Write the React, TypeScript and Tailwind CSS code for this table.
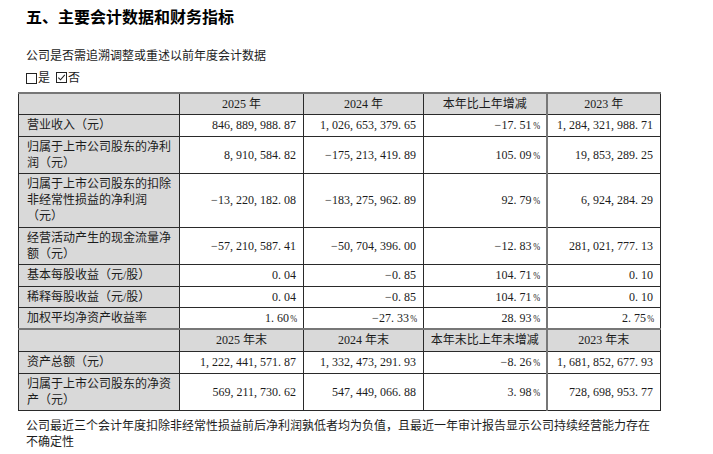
import React from 'react'

type Row = { label: string; values: string[]; h: string }

const headTop = ['2025 年', '2024 年', '本年比上年增减', '2023 年']
const headBottom = ['2025 年末', '2024 年末', '本年末比上年末增减', '2023 年末']

const rowsTop: Row[] = [
  { label: '营业收入（元）', values: ['846,889,988.87', '1,026,653,379.65', '-17.51%', '1,284,321,988.71'], h: 'h-[22px]' },
  { label: '归属于上市公司股东的净利润（元）', values: ['8,910,584.82', '-175,213,419.89', '105.09%', '19,853,289.25'], h: 'h-[37px]' },
  { label: '归属于上市公司股东的扣除非经常性损益的净利润（元）', values: ['-13,220,182.08', '-183,275,962.89', '92.79%', '6,924,284.29'], h: 'h-[54px]' },
  { label: '经营活动产生的现金流量净额（元）', values: ['-57,210,587.41', '-50,704,396.00', '-12.83%', '281,021,777.13'], h: 'h-[37px]' },
  { label: '基本每股收益（元/股）', values: ['0.04', '-0.85', '104.71%', '0.10'], h: 'h-[22px]' },
  { label: '稀释每股收益（元/股）', values: ['0.04', '-0.85', '104.71%', '0.10'], h: 'h-[21px]' },
  { label: '加权平均净资产收益率', values: ['1.60%', '-27.33%', '28.93%', '2.75%'], h: 'h-[22px]' },
]

const rowsBottom: Row[] = [
  { label: '资产总额（元）', values: ['1,222,441,571.87', '1,332,473,291.93', '-8.26%', '1,681,852,677.93'], h: 'h-[22px]' },
  { label: '归属于上市公司股东的净资产（元）', values: ['569,211,730.62', '547,449,066.88', '3.98%', '728,698,953.77'], h: 'h-[37px]' },
]

function Num({ text }: { text: string }) {
  return (
    <span className="whitespace-nowrap">
      {text.split('').map((ch, i) => {
        if (ch >= '0' && ch <= '9') return <span key={i}>{ch}</span>
        if (ch === ',' || ch === '.')
          return <span key={i} className="inline-block w-[6px] text-left">{ch}</span>
        if (ch === '-')
          return <span key={i} className="inline-block w-[7px] text-center">−</span>
        if (ch === '%')
          return <span key={i} className="inline-block w-[7px] text-center"><span className="inline-block scale-x-75 text-[11px]">%</span></span>
        return <span key={i}>{ch}</span>
      })}
    </span>
  )
}

function Box({ checked }: { checked?: boolean }) {
  return (
    <svg width="11" height="11" viewBox="0 0 11 11" className="inline-block align-[-1px]">
      <rect x="0.5" y="0.5" width="10" height="10" fill="none" stroke="#222" strokeWidth="1" />
      {checked && <path d="M2.3 5.6 L4.5 7.8 L8.8 2.8" fill="none" stroke="#222" strokeWidth="1.1" />}
    </svg>
  )
}

const cell = 'border border-[#2a2a2a] px-[7px] py-0 align-middle'

function HeadRow({ cols, h }: { cols: string[]; h: string }) {
  return (
    <tr className={`bg-[#d9d9d9] ${h}`}>
      <td className={`${cell} border-t-2 border-t-[#777]`}></td>
      {cols.map((c, i) => (
        <td
          key={c}
          className={`${cell} !px-0 whitespace-nowrap border-t-2 border-t-[#777] text-center ${i === 3 ? 'border-l-2 border-l-[#777]' : ''}`}
        >
          {c}
        </td>
      ))}
    </tr>
  )
}

function DataRow({ row }: { row: Row }) {
  return (
    <tr className={row.h}>
      <td className={`${cell} bg-[#d9d9d9] pl-[8px]`}>{row.label}</td>
      {row.values.map((v, i) => (
        <td key={i} className={`${cell} text-right bg-white ${i === 3 ? 'border-l-2 border-l-[#777]' : ''}`}>
          <Num text={v} />
        </td>
      ))}
    </tr>
  )
}

export default function App() {
  return (
    <div
      className="w-[713px] h-[454px] bg-white text-[#1c1c1c] overflow-hidden"
      style={{ fontFamily: '"Liberation Serif", "Noto Sans CJK SC", serif' }}
    >
      <div className="pl-[26px] pt-[6px]">
        <h1 className="text-[16px] leading-[24px] font-bold text-black">五、主要会计数据和财务指标</h1>
        <p className="mt-[17px] text-[12px] leading-[18px]">公司是否需追溯调整或重述以前年度会计数据</p>
        <p className="mt-[4px] text-[12px] leading-[18px] flex items-center">
          <Box />
          <span className="ml-[1px]">是</span>
          <span className="ml-[6px]"><Box checked /></span>
          <span className="ml-[1px]">否</span>
        </p>
      </div>

      <div className="pl-[18px] mt-[5px]">
        <table className="table-fixed border-collapse w-[642px] text-[12px] leading-[16px]">
          <colgroup>
            <col className="w-[161px]" />
            <col className="w-[124px]" />
            <col className="w-[120px]" />
            <col className="w-[123px]" />
            <col className="w-[114px]" />
          </colgroup>
          <tbody>
            <HeadRow cols={headTop} h="h-[21px]" />
            {rowsTop.map((r) => (
              <DataRow key={r.label} row={r} />
            ))}
            <HeadRow cols={headBottom} h="h-[22px]" />
            {rowsBottom.map((r) => (
              <DataRow key={r.label} row={r} />
            ))}
          </tbody>
        </table>
      </div>

      <p className="ml-[26px] mt-[7px] w-[628px] text-[12px] leading-[16px]">
        公司最近三个会计年度扣除非经常性损益前后净利润孰低者均为负值，且最近一年审计报告显示公司持续经营能力存在不确定性
      </p>
    </div>
  )
}
